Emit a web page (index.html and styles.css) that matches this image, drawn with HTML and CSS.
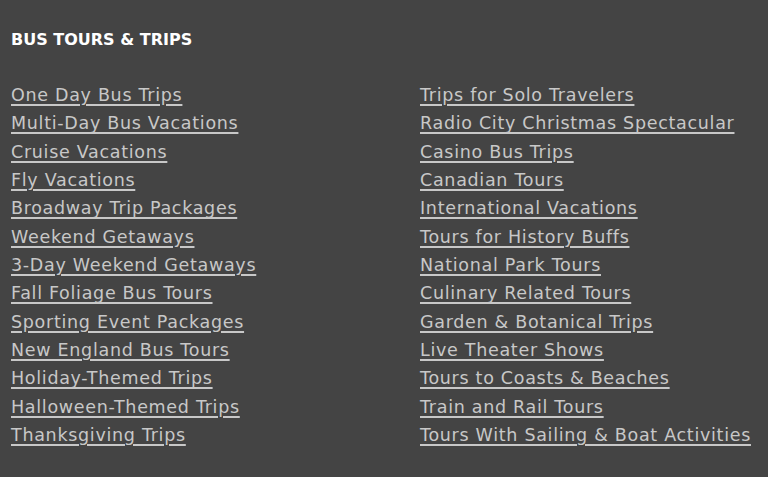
FILE: index.html
```html
<!DOCTYPE html>
<html lang="en">
<head>
<meta charset="utf-8">
<title>Bus Tours &amp; Trips</title>
<link rel="stylesheet" href="styles.css">
</head>
<body>
<section class="footer-block">
  <h2 class="heading">BUS TOURS &amp; TRIPS</h2>
  <div class="columns">
    <ul class="links">
      <li><a href="#">One Day Bus Trips</a></li>
      <li><a href="#">Multi-Day Bus Vacations</a></li>
      <li><a href="#">Cruise Vacations</a></li>
      <li><a href="#">Fly Vacations</a></li>
      <li><a href="#">Broadway Trip Packages</a></li>
      <li><a href="#">Weekend Getaways</a></li>
      <li><a href="#">3-Day Weekend Getaways</a></li>
      <li><a href="#">Fall Foliage Bus Tours</a></li>
      <li><a href="#">Sporting Event Packages</a></li>
      <li><a href="#">New England Bus Tours</a></li>
      <li><a href="#">Holiday-Themed Trips</a></li>
      <li><a href="#">Halloween-Themed Trips</a></li>
      <li><a href="#">Thanksgiving Trips</a></li>
    </ul>
    <ul class="links">
      <li><a href="#">Trips for Solo Travelers</a></li>
      <li><a href="#">Radio City Christmas Spectacular</a></li>
      <li><a href="#">Casino Bus Trips</a></li>
      <li><a href="#">Canadian Tours</a></li>
      <li><a href="#">International Vacations</a></li>
      <li><a href="#">Tours for History Buffs</a></li>
      <li><a href="#">National Park Tours</a></li>
      <li><a href="#">Culinary Related Tours</a></li>
      <li><a href="#">Garden &amp; Botanical Trips</a></li>
      <li><a href="#">Live Theater Shows</a></li>
      <li><a href="#">Tours to Coasts &amp; Beaches</a></li>
      <li><a href="#">Train and Rail Tours</a></li>
      <li><a href="#">Tours With Sailing &amp; Boat Activities</a></li>
    </ul>
  </div>
</section>
</body>
</html>
```
FILE: styles.css
```css
html, body {
  margin: 0;
  padding: 0;
  background: #444444;
  height: 100%;
}
body {
  font-family: "DejaVu Sans", sans-serif;
}
.footer-block {
  padding: 29px 11px 0 11px;
}
.heading {
  margin: 0;
  color: #ffffff;
  font-size: 16px;
  font-weight: 700;
  line-height: 22px;
  letter-spacing: 0;
}
.columns {
  display: grid;
  grid-template-columns: 409px 1fr;
  margin-top: 30px;
}
.links {
  list-style: none;
  margin: 0;
  padding: 0;
}
.links li {
  height: 28.33px;
  line-height: 28.33px;
  font-size: 17.5px;
  letter-spacing: 0.7px;
}
.links a {
  color: #c8c8c8;
  text-decoration: underline;
  text-decoration-thickness: 2px;
  text-underline-offset: 3px;
}
```
